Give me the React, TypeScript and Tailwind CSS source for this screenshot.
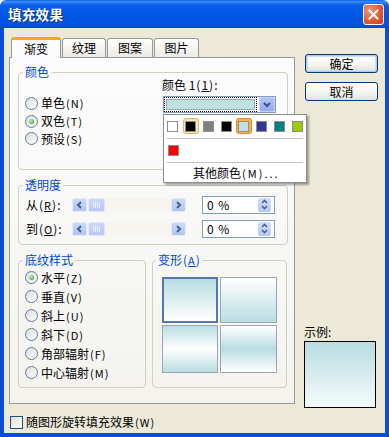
import React from 'react';

function Radio({ checked }: { checked?: boolean }) {
  return (
    <span className="w-[13px] h-[13px] rounded-full border border-[#5B7BA5] bg-[linear-gradient(135deg,#DCDCD7,#FFFFFF)] flex items-center justify-center shrink-0">
      {checked && <span className="w-[5px] h-[5px] rounded-full bg-[radial-gradient(circle_at_35%_35%,#B8F0B0,#21A121)]" />}
    </span>
  );
}

function RadioRow({ label, mn, checked, h }: { label: string; mn: string; checked?: boolean; h: string }) {
  return (
    <div className={'flex items-center gap-[3px] ' + h}>
      <Radio checked={checked} />
      <span>
        {label}
        <span className="text-[11px] tracking-[1px] ml-[1px]">({mn})</span>
      </span>
    </div>
  );
}

function Group({ title, className, children }: { title: React.ReactNode; className: string; children: React.ReactNode }) {
  return (
    <fieldset className={'border border-[#D0D0BF] rounded-[4px] min-w-0 ' + className}>
      <legend className="px-[2px] text-[#0046D5] leading-[14px]">{title}</legend>
      {children}
    </fieldset>
  );
}

function Chevron({ dir, color = '#4D6185' }: { dir: 'l' | 'r' | 'd' | 'u'; color?: string }) {
  const d =
    dir === 'l' ? 'M5 1 L2 4 L5 7' : dir === 'r' ? 'M2 1 L5 4 L2 7' : dir === 'd' ? 'M1 2 L4 5 L7 2' : 'M1 5 L4 2 L7 5';
  return (
    <svg width="8" height="8" viewBox="0 0 8 8">
      <path d={d} fill="none" stroke={color} strokeWidth="2" />
    </svg>
  );
}

function Slider() {
  return (
    <div className="flex items-center w-[114px] h-[14px] bg-[#F6F5F0]">
      <span className="w-[15px] h-[14px] rounded-[2px] border border-[#E3EAFA] bg-[linear-gradient(to_bottom,#CAD8FA,#B0C4F3)] flex items-center justify-center">
        <Chevron dir="l" />
      </span>
      <span className="ml-[1px] w-[17px] h-[14px] rounded-[2px] border border-[#E3EAFA] bg-[linear-gradient(to_bottom,#CAD8FA,#B6C9F5)] flex items-center justify-center gap-[1px]">
        <span className="w-[1px] h-[6px] bg-[#EEF3FE]" />
        <span className="w-[1px] h-[6px] bg-[#EEF3FE]" />
        <span className="w-[1px] h-[6px] bg-[#EEF3FE]" />
        <span className="w-[1px] h-[6px] bg-[#EEF3FE]" />
      </span>
      <span className="flex-1" />
      <span className="w-[15px] h-[14px] rounded-[2px] border border-[#E3EAFA] bg-[linear-gradient(to_bottom,#CAD8FA,#B0C4F3)] flex items-center justify-center">
        <Chevron dir="r" />
      </span>
    </div>
  );
}

function Spin() {
  return (
    <div className="w-[73px] h-[18px] border border-[#7F9DB9] bg-white flex items-center">
      <span className="pl-[4px] flex-1 tracking-[1px]">0 %</span>
      <span className="w-[13px] h-[14px] mr-[3px] rounded-[2px] bg-[linear-gradient(to_bottom,#D2DEFB,#B5C8F4)] flex flex-col items-center justify-center">
        <svg width="7" height="11" viewBox="0 0 7 11">
          <path d="M1 4 L3.5 1.5 L6 4" fill="none" stroke="#4D6185" strokeWidth="1.6" />
          <path d="M1 7 L3.5 9.5 L6 7" fill="none" stroke="#4D6185" strokeWidth="1.6" />
        </svg>
      </span>
    </div>
  );
}

function Swatch({ color, frame }: { color: string; frame?: 'sel' | 'hot' }) {
  const sw = <span className={'block w-[11px] h-[11px] border border-[#8E8E8E]'} style={{ background: color }} />;
  if (frame === 'sel')
    return (
      <span className="w-[18px] h-[18px] flex items-center justify-center">
        <span className="w-[16px] h-[16px] rounded-[3px] border border-[#E0B260] bg-[#FCE6AE] flex items-center justify-center">{sw}</span>
      </span>
    );
  if (frame === 'hot')
    return (
      <span className="w-[18px] h-[18px] flex items-center justify-center">
        <span className="w-[16px] h-[16px] rounded-[3px] border border-[#E4881F] bg-[#F8B24A] flex items-center justify-center">{sw}</span>
      </span>
    );
  return <span className="w-[18px] h-[18px] flex items-center justify-center">{sw}</span>;
}

function Button({ children, def }: { children: React.ReactNode; def?: boolean }) {
  return (
    <div
      className={
        'w-[73px] h-[19px] rounded-[3px] border border-[#003C74] bg-[linear-gradient(to_bottom,#FFFFFF,#F3F3EF_60%,#E3E1D6)] flex items-center justify-center ' +
        (def ? 'shadow-[inset_0_0_0_1px_#B3C9F3,inset_0_0_0_2px_#CEDCF8]' : '')
      }
    >
      {children}
    </div>
  );
}

export default function App() {
  return (
    <div className="w-[389px] h-[437px] flex flex-col font-['Noto_Sans_CJK_SC','Noto_Sans',sans-serif] text-[12px] leading-[14px] text-black select-none">
      {/* title bar */}
      <div className="h-[28px] shrink-0 flex items-center pl-[8px] pr-[5px] rounded-t-[6px] bg-[linear-gradient(to_bottom,#0B61E8_0%,#3A8DF8_6%,#0A5DEB_18%,#0057E5_50%,#0054E2_85%,#0049D0_100%)]">
        <span className="flex-1 text-white font-bold text-[13.5px] tracking-[0.3px] leading-[16px] [text-shadow:1px_1px_0_#0A2A80]">填充效果</span>
        <span className="w-[21px] h-[21px] rounded-[3px] border border-white bg-[radial-gradient(circle_at_30%_30%,#F09A7A,#E0552F_60%,#C8401E)] flex items-center justify-center">
          <svg width="11" height="11" viewBox="0 0 11 11">
            <path d="M1.5 1.5 L9.5 9.5 M9.5 1.5 L1.5 9.5" stroke="white" strokeWidth="2" strokeLinecap="square" />
          </svg>
        </span>
      </div>
      {/* body */}
      <div className="flex-1 flex bg-[#ECE9D8] border-x-[4px] border-b-[4px] border-[#0A4CDC] pl-[5px] pt-[8px]">
        {/* left column */}
        <div className="w-[286px] flex flex-col">
          {/* tabs */}
          <div className="h-[21px] flex items-end pl-[2px] relative z-10">
            <div className="w-[50px] h-[21px] mb-[-1px] rounded-t-[3px] border border-b-0 border-[#919B9C] border-t-[3px] border-t-[#F5A623] bg-[#FCFCFE] flex items-center justify-center pb-[1px]">
              渐变
            </div>
            <div className="ml-[1px] w-[44px] h-[19px] rounded-t-[3px] border border-b-0 border-[#919B9C] bg-[linear-gradient(to_bottom,#FFFFFF,#ECEBE5)] flex items-center justify-center">
              纹理
            </div>
            <div className="ml-[1px] w-[46px] h-[19px] rounded-t-[3px] border border-b-0 border-[#919B9C] bg-[linear-gradient(to_bottom,#FFFFFF,#ECEBE5)] flex items-center justify-center">
              图案
            </div>
            <div className="ml-[1px] w-[45px] h-[19px] rounded-t-[3px] border border-b-0 border-[#919B9C] bg-[linear-gradient(to_bottom,#FFFFFF,#ECEBE5)] flex items-center justify-center">
              图片
            </div>
          </div>
          {/* panel */}
          <div className="h-[347px] border border-[#919B9C] bg-[linear-gradient(to_bottom,#FCFCFE,#F4F3EE)] pl-[8px] pt-[7px] flex flex-col">
            {/* 颜色 */}
            <Group title="颜色" className="w-[270px] [&>legend]:ml-[4px]">
              <div className="h-[90px] flex">
                <div className="w-[143px] pl-[6px] pt-[15px] flex flex-col">
                  <RadioRow label="单色" mn="N" h="h-[18px]" />
                  <RadioRow label="双色" mn="T" checked h="h-[18px]" />
                  <RadioRow label="预设" mn="S" h="h-[17px]" />
                </div>
                <div className="mt-[-1px] flex flex-col">
                  <span className="leading-[14px]">
                    颜色 1<span className="tracking-[1px] ml-[1px]">(<span className="underline">1</span>):</span>
                  </span>
                  <div className="relative mt-[4px] ml-[1px] w-[113px] h-[17px] border border-[#7F9DB9] bg-white flex">
                    <div className="w-[93px] h-[15px] border border-dotted border-black p-[1px]">
                      <div className="w-full h-full border border-[#9AA8A8] bg-[#BFE1E3]" />
                    </div>
                    <span className="ml-auto w-[16px] h-[15px] rounded-[2px] border border-[#C5D2F5] bg-[linear-gradient(to_bottom,#B1C4F6,#94ABEC)] flex items-center justify-center">
                      <Chevron dir="d" color="#3C4F8A" />
                    </span>
                    {/* popup */}
                    <div className="absolute left-[-1px] top-[17px] w-[144px] h-[69px] bg-white border border-[#8E8E8E] shadow-[2px_2px_2px_rgba(0,0,0,0.35)] flex flex-col z-20">
                      <div className="mt-[2px] h-[18px] flex">
                        <Swatch color="#FFFFFF" />
                        <Swatch color="#000000" frame="sel" />
                        <Swatch color="#808080" />
                        <Swatch color="#000000" />
                        <Swatch color="#BFE1E3" frame="hot" />
                        <Swatch color="#333399" />
                        <Swatch color="#008080" />
                        <Swatch color="#99CC00" />
                      </div>
                      <div className="mt-[3px] mx-[3px] h-[1px] bg-[#C4C4C4]" />
                      <div className="mt-[2px] h-[18px] flex">
                        <Swatch color="#FF0000" />
                      </div>
                      <div className="mt-[3px] mx-[3px] h-[1px] bg-[#C4C4C4]" />
                      <div className="flex-1 flex items-center pl-[29px]">
                        其他颜色<span className="text-[11px] tracking-[2px] ml-[1px]">(M)...</span>
                      </div>
                    </div>
                  </div>
                </div>
              </div>
            </Group>
            {/* 透明度 */}
            <Group title="透明度" className="mt-[8px] w-[270px] [&>legend]:ml-[4px]">
              <div className="pt-[3px] pb-[6px] pl-[7px] flex flex-col gap-[5px]">
                <div className="h-[19px] flex items-center">
                  <span className="w-[46px]">
                    从<span className="tracking-[1px] ml-[1px]">(<span className="underline text-[11px]">R</span>):</span>
                  </span>
                  <Slider />
                  <span className="w-[16px]" />
                  <Spin />
                </div>
                <div className="h-[19px] flex items-center">
                  <span className="w-[46px]">
                    到<span className="tracking-[1px] ml-[1px]">(<span className="underline text-[11px]">O</span>):</span>
                  </span>
                  <Slider />
                  <span className="w-[16px]" />
                  <Spin />
                </div>
              </div>
            </Group>
            <div className="mt-[8px] flex gap-[6px]">
              <Group title="底纹样式" className="w-[128px] [&>legend]:ml-[4px]">
                <div className="pt-[1px] pb-[5px] pl-[6px] flex flex-col">
                  <RadioRow label="水平" mn="Z" checked h="h-[19px]" />
                  <RadioRow label="垂直" mn="V" h="h-[19px]" />
                  <RadioRow label="斜上" mn="U" h="h-[19px]" />
                  <RadioRow label="斜下" mn="D" h="h-[19px]" />
                  <RadioRow label="角部辐射" mn="F" h="h-[19px]" />
                  <RadioRow label="中心辐射" mn="M" h="h-[19px]" />
                </div>
              </Group>
              <Group
                title={
                  <span>
                    变形<span className="tracking-[1px] ml-[1px]">(<span className="underline text-[11px]">A</span>)</span>
                  </span>
                }
                className="w-[135px] [&>legend]:ml-[3px]"
              >
                <div className="pl-[9px] pt-[10px] pb-[14px]">
                  <div className="grid grid-cols-[56px_57px] grid-rows-[46px_48px] gap-[2px]">
                    <div className="border-[2px] border-[#5677AE] bg-[linear-gradient(to_bottom,#B9DDE1,#FFFFFF)]" />
                    <div className="border border-[#9AA6B6] bg-[linear-gradient(to_bottom,#FFFFFF,#B9DDE1)]" />
                    <div className="border border-[#9AA6B6] bg-[linear-gradient(to_bottom,#B9DDE1,#FFFFFF_50%,#B9DDE1)]" />
                    <div className="border border-[#9AA6B6] bg-[linear-gradient(to_bottom,#FFFFFF,#B9DDE1_50%,#FFFFFF)]" />
                  </div>
                </div>
              </Group>
            </div>
          </div>
          {/* checkbox */}
          <div className="mt-[11px] ml-[1px] h-[14px] flex items-center gap-[3px]">
            <span className="w-[13px] h-[13px] border border-[#1C5180] bg-[linear-gradient(135deg,#DCDCD7,#FFFFFF)]" />
            <span>
              随图形旋转填充效果<span className="text-[11px] tracking-[1px] ml-[1px]">(W)</span>
            </span>
          </div>
        </div>
        {/* right column */}
        <div className="ml-[9px] pt-[18px] flex flex-col">
          <div className="ml-[1px]">
            <Button def>确定</Button>
          </div>
          <div className="ml-[1px] mt-[9px]">
            <Button>取消</Button>
          </div>
          <span className="mt-[224px] leading-[14px]">示例:</span>
          <div className="mt-[2px] w-[72px] h-[67px] border border-black bg-[linear-gradient(to_bottom,#B9DDE1,#F4FBFB)]" />
        </div>
      </div>
    </div>
  );
}
